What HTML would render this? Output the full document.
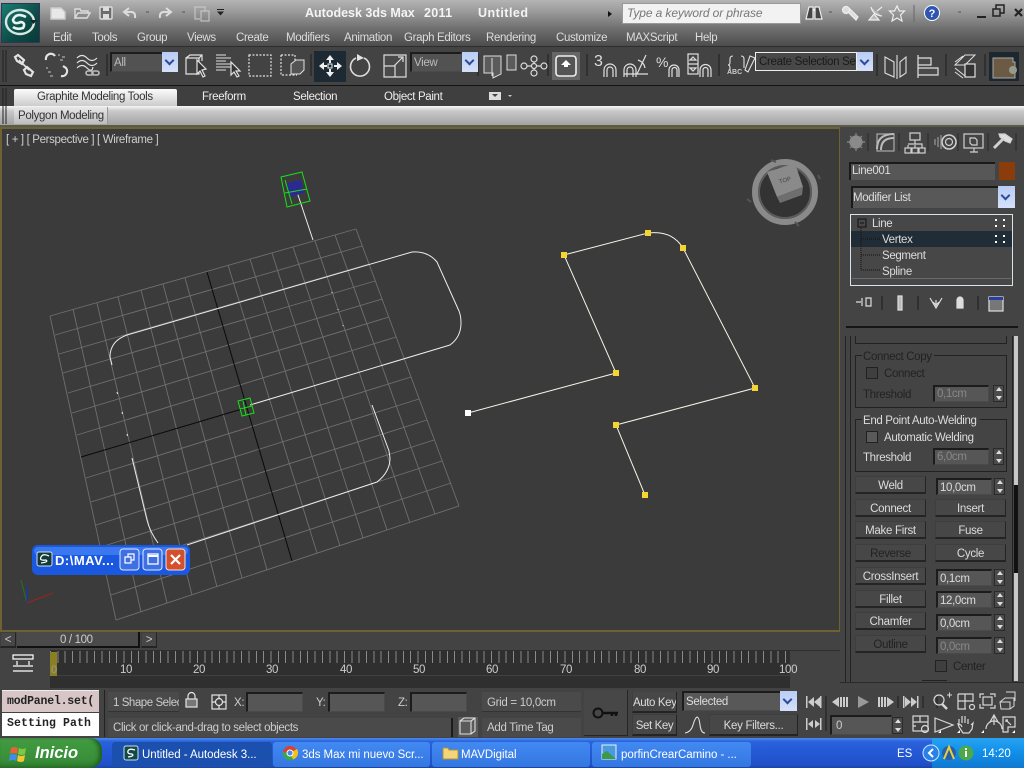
<!DOCTYPE html>
<html><head><meta charset="utf-8"><title>3ds Max</title>
<style>
html,body{margin:0;padding:0;width:1024px;height:768px;overflow:hidden;background:#444}
.a{position:absolute;box-sizing:border-box}
.t{position:absolute;white-space:nowrap;font:11.5px/14px "Liberation Sans",sans-serif;letter-spacing:-.35px;color:#dcdcdc;transform:translateY(1px)}
.f{position:absolute;box-sizing:border-box;background:#565656;border-top:2px solid #1c1c1c;border-left:2px solid #1c1c1c;border-right:1px solid #4a4a4a;border-bottom:1px solid #4a4a4a;white-space:nowrap;overflow:hidden;font:11.5px/14px "Liberation Sans",sans-serif;letter-spacing:-.35px;color:#dcdcdc;padding:2px 2px 0}
.b{position:absolute;box-sizing:border-box;background:#474747;border-right:1px solid #242424;border-bottom:2px solid #242424;border-top:1px solid #3e3e3e;border-left:1px solid #3e3e3e;text-align:center;font:11.5px/18px "Liberation Sans",sans-serif;letter-spacing:-.3px;color:#dcdcdc;white-space:nowrap;overflow:hidden}
.dim{color:#222222}
.ar{position:absolute;width:16px;background:linear-gradient(#b9cdf5,#d5e0fa);box-sizing:border-box}
.ar:after{content:"";position:absolute;left:4px;top:calc(50% - 5px);width:5px;height:5px;border-right:2px solid #2c4c9a;border-bottom:2px solid #2c4c9a;transform:rotate(45deg)}
.sp{position:absolute;width:11px;height:17px;background:#4c4c4c;border:1px solid #2a2a2a;box-sizing:border-box}
.sp:before{content:"";position:absolute;left:2px;top:1px;border:3px solid transparent;border-top:0;border-bottom:4px solid #ddd}
.sp:after{content:"";position:absolute;left:2px;bottom:1px;border:3px solid transparent;border-bottom:0;border-top:4px solid #ddd}
.g{position:absolute;box-sizing:border-box;border:1px solid #222}
.tb{position:absolute;top:742px;height:25px;box-sizing:border-box;border-radius:3px;background:linear-gradient(#4289f2,#3a7ee8 60%,#3378e0);font:11.5px/27px "Liberation Sans",sans-serif;letter-spacing:-.05px;color:#fff;white-space:nowrap;overflow:hidden}
</style></head><body>

<!-- title/menu gradient -->
<div class="a" style="left:0;top:0;width:1024px;height:47px;background:linear-gradient(#b4b4b4,#9a9a9a 25%,#707070 60%,#4a4a4a 100%)"></div>
<div class="a" style="left:0;top:46px;width:1024px;height:40px;background:#434343;border-bottom:1px solid #141414;border-top:1px solid #2e2e2e"></div>
<div class="a" style="left:0;top:86px;width:1024px;height:20px;background:#3f3f3f"></div>
<div class="a" style="left:14px;top:89px;width:163px;height:18px;background:linear-gradient(#fbfbfb,#c9c9c9);border-radius:2px 2px 0 0"></div>
<div class="a" style="left:0;top:106px;width:1024px;height:20px;background:linear-gradient(#f7f7f7,#c8c8c8 25%,#a0a0a0 100%)"></div>
<div class="a" style="left:14px;top:107px;width:94px;height:17px;background:linear-gradient(#e8e8e8,#bdbdbd);border-right:1px solid #999"></div>
<div class="a" style="left:0;top:125px;width:1024px;height:2px;background:#5a5a48"></div>

<!-- App button -->
<div class="a" style="left:1px;top:3px;width:39px;height:40px;background:linear-gradient(135deg,#1b7d73,#0d4a46 60%,#0a3a38);border:1px solid #335"></div>

<!-- viewport -->
<div class="a" style="left:0;top:127px;width:840px;height:505px;background:#3b3b3b;border:2px solid #6f6232;border-right-width:1px"></div>

<!-- command panel -->
<div class="a" style="left:840px;top:127px;width:184px;height:563px;background:#444"></div>
<div class="a" style="left:849px;top:162px;width:146px;height:18px;background:#575757;border-top:2px solid #1a1a1a;border-left:2px solid #1a1a1a"></div>
<div class="a" style="left:999px;top:162px;width:16px;height:18px;background:#8a3d0b"></div>
<div class="a" style="left:851px;top:186px;width:148px;height:22px;background:#585858;border-top:2px solid #1a1a1a;border-left:2px solid #1a1a1a"></div>
<div class="ar" style="left:998px;top:186px;width:17px;height:22px"></div>
<div class="a" style="left:850px;top:214px;width:163px;height:72px;background:#474747;border:1px solid #d8e4ea"></div>
<div class="a" style="left:851px;top:231px;width:161px;height:16px;background:#212d36"></div>
<div class="a" style="left:852px;top:278px;width:159px;height:1px;background:#6a6a6a"></div>
<div class="a" style="left:846px;top:326px;width:172px;height:2px;background:#151515"></div>
<div class="a" style="left:845px;top:336px;width:1px;height:346px;background:#222"></div>
<div class="a" style="left:850px;top:336px;width:1px;height:346px;background:#222"></div>
<div class="a" style="left:1012px;top:336px;width:1px;height:346px;background:#222"></div>
<div class="a" style="left:1014px;top:336px;width:4px;height:345px;background:#c8c8c8"></div>
<div class="a" style="left:1014px;top:485px;width:4px;height:88px;background:#111"></div>
<div class="a" style="left:855px;top:336px;width:152px;height:8px;border:1px solid #222;border-top:0"></div>
<div class="g" style="left:855px;top:355px;width:152px;height:53px"></div>
<div class="g" style="left:855px;top:419px;width:152px;height:53px"></div>
<div class="a" style="left:922px;top:680px;width:25px;height:1px;background:#222"></div>
<div class="a" style="left:840px;top:682px;width:184px;height:1px;background:#2a2a2a"></div>

<!-- time slider -->
<div class="a" style="left:0;top:632px;width:840px;height:58px;background:#434343"></div>
<div class="a" style="left:0;top:688px;width:1024px;height:50px;background:#434343"></div>
<div class="b" style="left:0;top:632px;width:16px;height:16px;line-height:15px;color:#ccc">&lt;</div>
<div class="a" style="left:17px;top:632px;width:123px;height:16px;background:#4a4a4a;border-right:2px solid #111;border-bottom:2px solid #111"></div>
<div class="b" style="left:141px;top:632px;width:16px;height:16px;line-height:15px;color:#ccc">&gt;</div>
<div class="a" style="left:50px;top:650px;width:740px;height:38px;background:#2f2f2f"></div>
<div class="a" style="left:790px;top:650px;width:50px;height:1px;background:#2f2f2f"></div>
<div class="a" style="left:50px;top:651px;width:740px;height:12px;background:repeating-linear-gradient(90deg,#8a8a8a 0 1px,transparent 1px 7.35px)"></div>
<div class="a" style="left:50px;top:675px;width:740px;height:1px;background:#404040"></div>
<div class="a" style="left:50px;top:652px;width:7px;height:24px;background:#8a7f22"></div>

<!-- listener -->
<div class="a" style="left:2px;top:690px;width:97px;height:22px;background:#d8c5c5;border-top:1px solid #eee;padding-left:5px"><div style="width:86px;overflow:hidden;font:bold 11.5px/21px 'Liberation Mono',monospace;letter-spacing:-.2px;color:#222;white-space:nowrap">modPanel.set(</div></div>
<div class="a" style="left:2px;top:713px;width:97px;height:23px;background:#fff;overflow:hidden;font:bold 11.5px/21px 'Liberation Mono',monospace;letter-spacing:.1px;color:#222;padding-left:5px;white-space:nowrap">Setting Path</div>
<div class="a" style="left:104px;top:690px;width:1px;height:47px;background:#222"></div>

<!-- status -->
<div class="a" style="left:108px;top:692px;width:71px;height:20px;background:#4a4a4a;border-bottom:1px solid #333;overflow:hidden;font:11.5px/22px 'Liberation Sans';letter-spacing:-.45px;color:#ccc;padding-left:5px;white-space:nowrap">1 Shape Selected</div>
<div class="f" style="left:246px;top:692px;width:57px;height:20px"></div>
<div class="f" style="left:328px;top:692px;width:57px;height:20px"></div>
<div class="f" style="left:410px;top:692px;width:57px;height:20px"></div>
<div class="a" style="left:482px;top:692px;width:99px;height:20px;background:#4a4a4a;border-bottom:1px solid #333;overflow:hidden;font:11.5px/22px 'Liberation Sans';letter-spacing:-.3px;color:#ccc;padding-left:5px">Grid = 10,0cm</div>
<div class="a" style="left:108px;top:718px;width:345px;height:19px;background:#4a4a4a;overflow:hidden;font:11.5px/21px 'Liberation Sans';letter-spacing:-.35px;color:#ccc;padding-left:5px;border-right:2px solid #1c1c1c">Click or click-and-drag to select objects</div>
<div class="a" style="left:482px;top:718px;width:99px;height:19px;background:#4a4a4a;overflow:hidden;font:11.5px/21px 'Liberation Sans';letter-spacing:-.3px;color:#ccc;padding-left:5px">Add Time Tag</div>
<div class="a" style="left:458px;top:717px;width:20px;height:20px;background:#5a5a5a"></div>
<div class="a" style="left:584px;top:690px;width:44px;height:46px;background:#474747;border-right:1px solid #262626;border-bottom:1px solid #262626"></div>
<div class="b" style="left:632px;top:692px;width:45px;height:21px;line-height:22px;border-top:0;letter-spacing:-.4px">Auto Key</div>
<div class="b" style="left:632px;top:714px;width:45px;height:22px;line-height:22px;letter-spacing:-.4px">Set Key</div>
<div class="f" style="left:682px;top:691px;width:100px;height:20px;background:#585858">Selected</div>
<div class="ar" style="left:780px;top:691px;width:17px;height:20px"></div>
<div class="b" style="left:709px;top:714px;width:89px;height:22px;line-height:22px">Key Filters...</div>
<div class="f" style="left:830px;top:715px;width:62px;height:20px;color:#ccc;padding-left:4px">0</div>
<div class="sp" style="left:892px;top:717px;height:17px"></div>

<!-- taskbar -->
<div class="a" style="left:0;top:738px;width:1024px;height:30px;background:linear-gradient(#4a8cf0 0,#2a62dc 12%,#2458d4 50%,#2050c8 90%,#1a42a8 100%)"></div>
<div class="a" style="left:0;top:738px;width:102px;height:30px;border-radius:0 12px 12px 0;background:linear-gradient(#5da85a,#3e9a3e 15%,#3a8f3a 70%,#2c7a2c);box-shadow:inset -3px 0 4px #1d5c1d"></div>
<div class="tb" style="left:112px;width:160px;background:#1c50ae;padding-left:30px">Untitled - Autodesk 3...</div>
<div class="tb" style="left:273px;width:157px;padding-left:29px">3ds Max mi nuevo Scr...</div>
<div class="tb" style="left:432px;width:158px;padding-left:29px">MAVDigital</div>
<div class="tb" style="left:592px;width:159px;padding-left:29px">porfinCrearCamino - ...</div>
<div class="a" style="left:932px;top:738px;width:92px;height:30px;background:linear-gradient(#27a3f2,#0f8ee8 50%,#1178d0)"></div>

<!-- main svg -->
<svg class="a" style="left:0;top:0" width="1024" height="768" viewBox="0 0 1024 768" fill="none">
<!-- grid -->
<g stroke="#6f6f6f" stroke-width=".9">
<path d="M50 316L356 229M55 335L362 246M59 354L369 264M63 373L375 281M68 393L382 299M72 413L389 317M77 435L396 337M86 478L411 377M91 502L419 399M96 525L427 420M101 547L434 440M106 570L442 461M111 595L451 483M116 620L459 506"/>
<path d="M50 316L116 620M73 309L141 612M97 303L167 603M118 297L192 595M141 290L217 587M163 284L242 578M185 278L267 570M228 265L317 553M250 259L340 546M272 253L363 538M293 247L387 530M315 241L410 523M335 235L435 514M356 229L459 506"/>
</g>
<g stroke="#0a0a0a" stroke-width="1"><path d="M207 272L292 561M81 457L242 409"/></g>
<!-- shape 1 -->
<g stroke="#ececec" stroke-width="1">
<path d="M250 405L450 345Q461 337 461 323Q461 316 459 311L437 262Q428 251 412 252L127 335Q110 341 110 357L112 365"/>
<path d="M117 392L117.500 394M122 412L122.500 414M127 434L127.500 436M132 458L147 520Q150 532 158 543M187 545L377 482Q390 472 390 458L389 451L372 405"/>
<path d="M332 292L332 293M338 309L338 310M343 325L343 326" stroke="#ddd"/>
<path d="M297 192L313 240"/>
</g>
<!-- gizmos -->
<path d="M287 183L301 180L304 193L290 197Z" fill="#2a2a90"/>
<g stroke="#18e018" stroke-width="1">
<path d="M281 177L302 172L310 201L287 207ZM285 193L307 189M285 180L292 204"/>
<path d="M238 401L250 398L254 413L242 416ZM240 409L252 406M243 401L246 415"/>
</g>
<!-- shape 2 -->
<path d="M468 413L616 373L564 255L648 233Q672 230 683 248L755 388L616 425L645 495" stroke="#f4f4e8" stroke-width="1"/>
<g fill="#f5d531"><rect x="561" y="252" width="6" height="6"/><rect x="645" y="230" width="6" height="6"/><rect x="680" y="245" width="6" height="6"/><rect x="613" y="370" width="6" height="6"/><rect x="752" y="385" width="6" height="6"/><rect x="613" y="422" width="6" height="6"/><rect x="642" y="492" width="6" height="6"/></g>
<rect x="465" y="410" width="6" height="6" fill="#fff"/>
<!-- tripod -->
<path d="M27 603L53 593" stroke="#a02020" stroke-width="1.2"/><path d="M27 603L21 580" stroke="#207020" stroke-width="1.2"/><path d="M27 603L27 586" stroke="#2030b0" stroke-width="1.2"/>
<!-- viewcube -->
<g>
<circle cx="785" cy="192" r="30" stroke="#8a8a8a" stroke-width="6"/>
<circle cx="785" cy="192" r="26" fill="#333" stroke="#5c5c5c" stroke-width="2"/>
<path d="M767 172L795 163L803 187L777 197Z" fill="#8a8a8a"/>
<path d="M777 197L803 187L802 195L780 203Z" fill="#6e6e6e"/>
<path d="M747 199L751 202M771 160L776 162M818 175L820 179M795 222L799 226" stroke="#555" stroke-width="2"/>
<text x="785" y="182" font-family="Liberation Sans" font-size="6" fill="#444" text-anchor="middle" transform="rotate(-16 785 180)">TOP</text>
</g>
<!-- App logo -->
<ellipse cx="20" cy="22" rx="14" ry="12" stroke="#d5e8e4" stroke-width="2.4"/>
<path d="M26 17Q16 12 13 20Q14 25 21 22Q26 23 23 28Q17 30 13 27" stroke="#e8f4f0" stroke-width="2.6"/>
<path d="M30 20h7l-3.500 4z" fill="#222"/>
<!-- QAT -->
<g stroke="#eee" stroke-width="1.4">
<path d="M51 8h10l4 4v7H51Z" fill="#e8e8e8" stroke="#ccc"/>
<path d="M75 18V9h5l1 2h7v2M75 18l3-5h12l-3 5Z" fill="#8c8c8c" stroke="#ddd"/>
<rect x="100" y="7" width="12" height="12" rx="1" fill="#6d6d6d" stroke="#ddd"/><rect x="103" y="7" width="6" height="4" fill="#ddd" stroke="none"/><rect x="103" y="14" width="6" height="5" fill="#ddd" stroke="none"/>
<path d="M135 18q1-7-6-6h-4m4-4-5 4 5 4" stroke="#ddd" stroke-width="2"/>
<path d="M160 18q-1-7 6-6h4m-4-4 5 4-5 4" stroke="#ddd" stroke-width="2"/>
<path d="M195 10V7h10v4M195 10v9h5" stroke="#ccc" stroke-width="1"/><rect x="201" y="11" width="8" height="10" stroke="#ccc" stroke-width="1"/>
</g>
<path d="M146 12h3M182 12h3" stroke="#777" stroke-width="2"/>
<path d="M217 9h7v1h-7zM217 11.500h7l-3.500 4z" fill="#222"/>
<!-- toolbars -->
<path d="M3 50V82M6 50V82M3 88V124M6 88V124" stroke="#222"/>
<g stroke="#e2e2e2" stroke-width="1.6">
<!-- link -->
<path d="M15 57l3-2 6 5-2 4-5-3zM24 70l3-3 6 5-2 4-5-2z" stroke-width="2.2"/>
<path d="M19 60l10 10" stroke-width="1.6"/>
<!-- unlink -->
<path d="M46 60a5 5 0 0 1 9-4M61 76a5 5 0 0 0 5-8l-3-2" stroke-width="2.2"/>
<path d="M58 55h2M62 57h3M60 60h3M46 68h2M48 72h3M50 76h3" stroke="#aaa" stroke-width="1.3"/>
<!-- bind -->
<path d="M77 58q5-5 10 0t10 0M77 63q5-5 10 0t10 0M77 68q5-5 10 0t6-1" stroke-width="1.2"/>
<rect x="86" y="71" width="7" height="4" rx="2" stroke="#bbb"/><rect x="92" y="71" width="7" height="4" rx="2" stroke="#bbb"/>
<!-- select obj -->
<path d="M186 58l4-3h12v6M186 58h13v16h-13zM199 58l3-3" stroke-width="1.2" fill="none"/>
<path d="M197 60l0 14 3-3 3 6 2-1-3-6 4-1z" fill="#333" stroke-width="1.2"/>
<!-- by name -->
<path d="M216 55h10M216 58h15M216 61h10M216 64h15M216 67h15M216 70h10" stroke-width="1"/>
<path d="M231 62l0 13 3-3 3 5 2-1-3-5 4 0z" fill="#333" stroke-width="1.2"/>
<!-- rect -->
<rect x="249" y="55" width="22" height="21" stroke-dasharray="2 1.500" stroke-width="1.2"/>
<path d="M281 55h14v5M281 55v20h16" stroke-dasharray="2 1.500" stroke-width="1.2"/>
<path d="M291 64l5-4h8v10l-4 4h-9z" fill="#545454" stroke-width="1"/>
</g>
<rect x="314" y="51" width="32" height="31" fill="#1d2a33"/>
<g fill="#f0f0f0">
<path d="M330 55l4 5h-8zM330 77l4-5h-8zM319 66l5-4v8zM342 66l-5-4v8z"/>
<rect x="324" y="65" width="3" height="2"/><rect x="334" y="65" width="3" height="2"/><rect x="329" y="60" width="2" height="3"/><rect x="329" y="69" width="2" height="3"/>
<rect x="328" y="64" width="4" height="4" fill="none" stroke="#f0f0f0"/>
</g>
<g stroke="#dcdcdc" stroke-width="1.2">
<path d="M356 58a9.500 9.500 0 1 0 8 0" stroke-width="1.6"/><path d="M357 54l7 4-7 3z" fill="#e4e4e4" stroke="none"/>
<path d="M384 58v-3h22v22h-22zM384 66h11v11M394 66l9-9m-5 0h5v5" fill="#4a4a4a"/>
<path d="M484 56h17v18l-8 4v-5h-9zM492 58v18M507 55h9v15h-9z" fill="#5b5b5b" stroke-width="1"/>
<circle cx="534" cy="59" r="3"/><circle cx="534" cy="66" r="2.500"/><circle cx="524" cy="66" r="3"/><circle cx="544" cy="66" r="3"/><circle cx="534" cy="73" r="3"/><path d="M527 66h5M537 66h4M534 62v2M534 69v1"/>
</g>
<rect x="552" y="52" width="28" height="28" fill="#666"/>
<rect x="556" y="56" width="20" height="20" rx="3" fill="#555" stroke="#eee" stroke-width="1.6"/><path d="M566 60l5 5h-3v2h-4v-2h-3z" fill="#fff"/>
<path d="M107 54V76M478 54V76M548 54V76M587 54V76M719 54V76M877 54V76M946 54V76M985 54V76M311 54V76" stroke="#1c1c1c"/>
<g stroke="#e0e0e0" stroke-width="1.2">
<path d="M607 77v-7a3 3 0 0 1 6 0v7M604 77v-7a6 6 0 0 1 12 0v7"/>
<path d="M627 77v-7a3 3 0 0 1 6 0v7M624 77v-7a6 6 0 0 1 12 0v7M624 74h24M637 74l9-19M638 60q6 2 7 8"/>
<path d="M672 77v-7a2.500 2.500 0 0 1 5 0v7M669 77v-7a5 5 0 0 1 10 0v7"/>
<rect x="688" y="54" width="10" height="20"/><path d="M693 57l3 3h-6zM693 71l3-3h-6zM688 64h10"/><path d="M703 77v-7a2.500 2.500 0 0 1 5 0v7M700 77v-7a5 5 0 0 1 11 0v7"/>
<path d="M733 56q-3 0-3 3v3q0 3-2 3q2 0 2 3v3M741 56q3 0 3 3v9M745 70l5-14 5 2-7 14z" stroke-width="1.1"/>
<path d="M885 57l9 5v15l-9-4zM906 57l-6 5v15l6-4zM897 55v24" stroke-width="1.1"/>
<path d="M918 55v23M918 58h13v7h-13zM918 68h20v7h-20z" fill="#4a4a4a" stroke-width="1.2"/>
<path d="M955 65l10-10h10l-10 10zM955 68l10 8M955 72l8 6M955 62l8-6" stroke-width="1"/><rect x="965" y="64" width="10" height="13" fill="#333" stroke-width="1.2"/>
</g>
<rect x="989" y="52" width="30" height="29" fill="#1c2730"/>
<path d="M993 58h20v4h2v16h-22Z" fill="#6b5a44" stroke="#aaa"/><circle cx="1013" cy="70" r="4" fill="#9a9a8a"/>
<!-- search icons -->
<g stroke="#eee" stroke-width="1.2">
<path d="M806 19l2-8 1-4h4v12zM815 19V7h4l1 4 2 8z" fill="#444"/><path d="M813 10h2" stroke-width="2"/>
<path d="M849 8l9 9-2 3-9-9" fill="#ddd"/><circle cx="846" cy="10" r="3.500" fill="#ddd"/>
<path d="M871 7q2 8 11 9M877 11l5-4M869 20l5-6 5 6z" fill="#bbb"/>
<path d="M897 6l2.500 5h5l-4 4 1.500 6-5-3-5 3 1.500-6-4-4h5z"/>
</g>
<path d="M829 12h3M958 12h3" stroke="#777" stroke-width="2"/>
<circle cx="932" cy="13" r="7.500" fill="#2f55b0" stroke="#fff" stroke-width="1"/>
<text x="932" y="17" text-anchor="middle" font-family="Liberation Sans" font-weight="bold" font-size="11" fill="#fff">?</text>
<path d="M914 5V22" stroke="#666"/>
<path d="M977 17h9" stroke="#222" stroke-width="2"/>
<path d="M993 9h7v7h-7zM996 9V5h8v8h-4" stroke="#222" stroke-width="1.500" />
<path d="M1015 9l7 7m0-7l-7 7" stroke="#222" stroke-width="2.200"/>
<path d="M608 11l4 3-4 3z" fill="#111"/>
<path d="M494 95h4M489 92h12v8h-12z" fill="#ddd"/><path d="M492 94l3 3 3-3z" fill="#444"/>
<path d="M508 95h4l-2 2z" fill="#ccc"/>
<!-- cmd tabs -->
<g stroke="#d0d0d0" stroke-width="1.200">
<circle cx="856" cy="142" r="6" fill="#8a8a8a" stroke="#8a8a8a"/><path d="M856 133v18M847 142h18M850 136l12 12M862 136l-12 12" stroke="#8a8a8a"/>
<rect x="877" y="134" width="17" height="17" stroke="#aaa"/><path d="M877 149q0-15 17-15M881 150q0-12 13-12" stroke="#bbb" stroke-width="2"/>
<path d="M910 133h10v7h-10zM915 140v4M908 144h14v1M908 145v3M915 145v3M922 145v3"/><rect x="905" y="148" width="6" height="5"/><rect x="912" y="148" width="6" height="5"/><rect x="919" y="148" width="6" height="5"/>
<circle cx="949" cy="142" r="7" stroke-width="1.600"/><circle cx="949" cy="142" r="3.500"/><path d="M938 137v10M941 135v14M935 139v6" stroke="#999"/>
<rect x="964" y="134" width="19" height="14"/><path d="M970 152h8M974 148v4M970 143v-5h5l2 2v5h-5z"/>
<path d="M994 148l10-10" stroke-width="3"/><path d="M999 134h6l7 5-2 4-5-2-5-4z" fill="#ddd"/>
</g>
<path d="M868 133V151M899 133V151M928 133V151M958 133V151M988 133V151M1016 133V151" stroke="#2a2a2a"/>
<!-- stack -->
<rect x="858" y="219" width="8" height="8" stroke="#111" fill="none"/><path d="M860 223h4" stroke="#111"/>
<path d="M861 228V270M861 239h20M861 255h20M861 270h20" stroke="#111" stroke-dasharray="1 1"/>
<g fill="#fff"><rect x="995" y="219" width="2" height="2"/><rect x="1003" y="219" width="2" height="2"/><rect x="995" y="225" width="2" height="2"/><rect x="1003" y="225" width="2" height="2"/><rect x="995" y="235" width="2" height="2"/><rect x="1003" y="235" width="2" height="2"/><rect x="995" y="241" width="2" height="2"/><rect x="1003" y="241" width="2" height="2"/></g>
<!-- stack btns -->
<g stroke="#ddd" stroke-width="1.200">
<path d="M856 302h5M862 298v8M866 298h5v8h-5z"/>
<path d="M898 296h4v14h-4z" fill="#bbb"/>
<path d="M930 298l6 10 6-10M936 300v8M933 302l3 3 3-3" />
<path d="M957 300a3 3 0 0 1 6 0v8h-6z" fill="#ddd"/>
<rect x="989" y="297" width="14" height="14" fill="#777"/><rect x="989" y="297" width="14" height="3" fill="#2a3ea0" stroke="none"/>
</g>
<path d="M882 296V310M918 296V310M978 296V310" stroke="#1c1c1c"/>
<!-- checkboxes -->
<g stroke="#222"><rect x="866.500" y="367.500" width="11" height="11" fill="#3f3f3f"/><rect x="866.500" y="431.500" width="11" height="11" fill="#5a5a5a"/><rect x="935.500" y="660.500" width="11" height="11" fill="#3f3f3f"/></g>
<!-- status icons -->
<g stroke="#e4e4e4" stroke-width="1.2">
<path d="M188 699v-3a3.500 3.500 0 0 1 7 0v3"/><rect x="186" y="699" width="11" height="8" fill="#777"/>
<rect x="212" y="695" width="14" height="14"/><circle cx="219" cy="702" r="3.500"/><path d="M219 695v3.500M219 705.500V709M212 702h3.500M222.500 702H226"/>
<path d="M460 721l4-3h11v13l-4 3h-11zM460 721h11v13M471 721l4-3" stroke="#ddd" stroke-width="1.100"/>
<path d="M40 652h20v4H40zM40 656h20M40 663h20M40 668h20M44 662v-4M56 662v-4" stroke="#fff" stroke-width="1.200" transform="translate(-27 3) scale(1)"/>
</g>
<circle cx="598" cy="713" r="4.500" stroke="#111" stroke-width="2"/><path d="M602 713h16M612 713v3M616 713v3" stroke="#111" stroke-width="2.400"/>
<path d="M685 733q6-1 8-8t4-8q2 0 3 8t5 8" stroke="#ddd" stroke-width="1.100"/>
<!-- playback -->
<g fill="#ccc">
<path d="M806 696v12h1.500v-12zM808 702l6-5v10zM814 702l6-5v10zM820 696h1.500v12H820z"/>
<path d="M832 702l7-5v10zM840 697h2v10h-2zM843 697h2v10h-2zM846 697h2v10h-2z"/>
<path d="M858 696l11 6-11 6z" fill="#999"/>
<path d="M878 697h2v10h-2zM881 697h2v10h-2zM884 697h2v10h-2zM887 697l7 5-7 5z"/>
<path d="M905 697l6 5-6 5zM911 697l6 5-6 5zM917 696h1.500v12H917zM903 696h1.500v12H903z"/>
<path d="M806 718h1.500v12H806zM808 724l5-4v8zM815 720l5 4-5 4zM820 718h1.500v12H820z"/>
</g>
<path d="M826 696V731M898 696V708M923 696V708M937 696V708" stroke="#1c1c1c"/>
<g stroke="#d8d8d8" stroke-width="1.200">
<circle cx="939" cy="700" r="5"/><path d="M942 704l5 5" stroke-width="2.500"/><path d="M947 695h5M949.500 692.500v5" stroke-width="1"/>
<path d="M958 694h15v8M958 694v15h8M958 701h15M965 694v15" />
<circle cx="972" cy="707" r="2.500"/>
<path d="M980 698v-4h4M990 694h5v3M980 704v4h4M990 708h5v-3" /><rect x="983" y="697" width="9" height="8"/>
<path d="M1000 702l5-4h9v8l-4 3h-9zM1006 692h9v9M1000 702h10v7" stroke-width="1"/>
<rect x="913" y="716" width="15" height="15"/><path d="M913 722h15M920 716v6M913 726h3"/><circle cx="925" cy="729" r="3.500"/>
<path d="M935 718l18 7-18 7z"/>
<path d="M959 724v-5m3 4v-7m3 7v-7m3 8v-5m3 6l2-2-1 6-3 4h-6l-4-6-1-3 3 1 1 2"/>
<path d="M986 729a8 8 0 0 1 16 0M994 715v10M990 722l4-7 4 7" />
<path d="M1003 717h12v10h-7v5h-5zM1006 720l5 5m-5-3v-2h2"/>
</g>
<path d="M957 733l3-3v3zM981 733l3-3v3zM1012 733l3-3v3zM938 733l3-3v3z" fill="#fff"/>
<!-- floating window -->
<rect x="32" y="545" width="158" height="30" rx="6" fill="#1a58e0"/>
<rect x="34" y="547" width="154" height="8" rx="4" fill="#3a78f0"/>
<rect x="37" y="552" width="15" height="14" rx="2" fill="#123a3a" stroke="#cde" stroke-width="1"/><path d="M49 556q-6-3-8 1t5 3q3 2-5 3" stroke="#fff" stroke-width="1.300"/>
<rect x="120" y="549" width="19" height="21" rx="3" fill="#3f6fe4" stroke="#dfe8ff"/><rect x="143" y="549" width="19" height="21" rx="3" fill="#3f6fe4" stroke="#dfe8ff"/><rect x="166" y="549" width="19" height="21" rx="3" fill="#d4502c" stroke="#f8dfd4"/>
<path d="M125 557h6v6h-6zM128 557v-3h6v6h-3" stroke="#fff" stroke-width="1.200"/><rect x="148" y="554" width="10" height="10" stroke="#fff" stroke-width="1.300"/><path d="M148 556h10" stroke="#fff" stroke-width="2"/><path d="M171 555l9 9m0-9l-9 9" stroke="#fff" stroke-width="2.200"/>
<!-- tasks icons -->
<rect x="124" y="746" width="14" height="14" rx="2" fill="#124a4a" stroke="#cde"/><path d="M135 750q-6-2-7 1t4 3q3 2-4 3" stroke="#fff" stroke-width="1.300"/>
<circle cx="290" cy="753" r="7" fill="#d8412f"/><path d="M290 753L297 749A7 7 0 0 1 293 759.500z" fill="#f2c01a"/><path d="M290 753L293 759.500A7 7 0 0 1 283 752z" fill="#35a853"/><circle cx="290" cy="753" r="3" fill="#4a86e8" stroke="#fff"/>
<path d="M443 748h5l1 2h9v9h-15z" fill="#f4d67a" stroke="#b89030"/>
<rect x="602" y="745" width="14" height="14" fill="#4a9ae0" stroke="#eee"/><path d="M602 759v-5l5-3 9 8z" fill="#3a9a4a"/>
<!-- start flag -->
<path d="M11 748q3-2 7 0l-1 6q-3-2-7 0z" fill="#e8613a"/><path d="M19 748q3 2 7 0l-1 6q-3 2-7 0z" fill="#7fc844"/><path d="M10 755q3-2 7 0l-1 6q-3-2-7 0z" fill="#3f8fe8"/><path d="M18 755q3 2 7 0l-1 6q-3 2-7 0z" fill="#f2c732"/>
<!-- tray -->
<circle cx="931" cy="753" r="8" fill="#2a7fe8" stroke="#cfe6ff"/><path d="M933 749l-4 4 4 4" stroke="#fff" stroke-width="2"/>
<circle cx="949" cy="753" r="7" fill="#2a60a0"/><path d="M944 759l5-12 5 12" stroke="#e8d040" stroke-width="2"/>
<circle cx="966" cy="753" r="7.500" fill="#4ca848"/><rect x="965" y="751" width="2" height="6" fill="#fff"/><rect x="965" y="748" width="2" height="2" fill="#fff"/>
</svg>

<!-- search -->
<div class="a" style="left:622px;top:3px;width:179px;height:21px;background:#f2f2f2;border:1px solid #999;font:italic 12px/19px 'Liberation Sans';letter-spacing:-.1px;color:#777;padding-left:4px">Type a keyword or phrase</div>

<!-- text -->
<span class="t" style="left:305px;top:5px;font-weight:bold;font-size:12.500px;color:#f4f4f4;letter-spacing:0">Autodesk 3ds Max</span>
<span class="t" style="left:424px;top:5px;font-weight:bold;font-size:12.500px;color:#f4f4f4;letter-spacing:.3px">2011</span>
<span class="t" style="left:478px;top:5px;font-weight:bold;font-size:12.500px;color:#f4f4f4;letter-spacing:.5px">Untitled</span>

<span class="t" style="left:53px;top:30px">Edit</span><span class="t" style="left:92px;top:30px">Tools</span><span class="t" style="left:137px;top:30px">Group</span><span class="t" style="left:187px;top:30px">Views</span><span class="t" style="left:236px;top:30px">Create</span><span class="t" style="left:286px;top:30px">Modifiers</span><span class="t" style="left:344px;top:30px">Animation</span><span class="t" style="left:404px;top:30px">Graph Editors</span><span class="t" style="left:486px;top:30px">Rendering</span><span class="t" style="left:556px;top:30px">Customize</span><span class="t" style="left:626px;top:30px">MAXScript</span><span class="t" style="left:695px;top:30px">Help</span>

<div class="f" style="left:110px;top:52px;width:53px;height:20px;color:#bbb;background:#525252">All</div><div class="ar" style="left:162px;top:52px;height:20px"></div>
<div class="f" style="left:410px;top:52px;width:52px;height:20px;color:#bbb;background:#525252">View</div><div class="ar" style="left:462px;top:52px;height:20px"></div>
<div class="a" style="left:755px;top:52px;width:102px;height:19px;background:#484848;border:1px solid #eee;overflow:hidden;font:11.5px/19px 'Liberation Sans';letter-spacing:-.3px;color:#1a1a1a;white-space:nowrap;padding-left:3px">Create Selection Set</div><div class="ar" style="left:857px;top:52px;height:19px"></div>

<span class="t" style="left:594px;top:52px;font-size:16px;line-height:18px;letter-spacing:0;color:#ddd">3</span>
<span class="t" style="left:656px;top:52px;font-size:14px;line-height:18px;letter-spacing:0;color:#ddd">%</span>
<span class="t" style="left:727px;top:67px;font-size:7px;line-height:9px;font-weight:bold;letter-spacing:0;color:#ccc">ABC</span>

<span class="t" style="left:37px;top:89px;color:#333">Graphite Modeling Tools</span>
<span class="t" style="left:202px;top:89px;color:#eee">Freeform</span>
<span class="t" style="left:293px;top:89px;color:#eee">Selection</span>
<span class="t" style="left:384px;top:89px;color:#eee">Object Paint</span>
<span class="t" style="left:18px;top:108px;color:#333">Polygon Modeling</span>

<span class="t" style="left:6px;top:132px;color:#cfcfcf">[ + ] [ Perspective ] [ Wireframe ]</span>
<span class="t" style="left:55px;top:552px;font:bold 13px/16px 'Liberation Sans';color:#fff;letter-spacing:.5px">D:\MAV...</span>

<span class="t" style="left:852px;top:163px">Line001</span>
<span class="t" style="left:853px;top:190px">Modifier List</span>
<span class="t" style="left:872px;top:216px">Line</span>
<span class="t" style="left:882px;top:232px">Vertex</span>
<span class="t" style="left:882px;top:248px">Segment</span>
<span class="t" style="left:882px;top:264px">Spline</span>

<span class="t dim" style="left:862px;top:349px;background:#444;padding:0 2px 0 1px">Connect Copy</span>
<span class="t dim" style="left:884px;top:366px">Connect</span>
<span class="t dim" style="left:863px;top:387px">Threshold</span>
<div class="f" style="left:933px;top:385px;width:56px;height:17px;color:#888;padding:1px 2px 0;line-height:13px">0,1cm</div><div class="sp" style="left:993px;top:385px"></div>
<span class="t" style="left:862px;top:413px;background:#444;padding:0 3px 0 1px">End Point Auto-Welding</span>
<span class="t" style="left:884px;top:430px">Automatic Welding</span>
<span class="t" style="left:863px;top:450px">Threshold</span>
<div class="f" style="left:933px;top:448px;width:56px;height:17px;color:#888;padding:1px 2px 0;line-height:13px">6,0cm</div><div class="sp" style="left:993px;top:448px"></div>

<div class="b" style="left:855px;top:476px;width:71px;height:18px">Weld</div>
<div class="f" style="left:936px;top:478px;width:56px;height:17px;padding:1px 2px 0;line-height:14px">10,0cm</div><div class="sp" style="left:994px;top:478px"></div>
<div class="b" style="left:855px;top:499px;width:71px;height:18px">Connect</div><div class="b" style="left:935px;top:499px;width:71px;height:18px">Insert</div>
<div class="b" style="left:855px;top:521px;width:71px;height:18px">Make First</div><div class="b" style="left:935px;top:521px;width:71px;height:18px">Fuse</div>
<div class="b dim" style="left:855px;top:544px;width:71px;height:18px;color:#222">Reverse</div><div class="b" style="left:935px;top:544px;width:71px;height:18px">Cycle</div>
<div class="b" style="left:855px;top:567px;width:71px;height:18px">CrossInsert</div>
<div class="f" style="left:936px;top:569px;width:56px;height:17px;padding:1px 2px 0;line-height:14px">0,1cm</div><div class="sp" style="left:994px;top:569px"></div>
<div class="b" style="left:855px;top:590px;width:71px;height:18px">Fillet</div>
<div class="f" style="left:936px;top:591px;width:56px;height:17px;padding:1px 2px 0;line-height:14px">12,0cm</div><div class="sp" style="left:994px;top:591px"></div>
<div class="b" style="left:855px;top:612px;width:71px;height:18px">Chamfer</div>
<div class="f" style="left:936px;top:614px;width:56px;height:17px;padding:1px 2px 0;line-height:14px">0,0cm</div><div class="sp" style="left:994px;top:614px"></div>
<div class="b" style="left:855px;top:635px;width:71px;height:18px;color:#222">Outline</div>
<div class="f" style="left:936px;top:637px;width:56px;height:17px;padding:1px 2px 0;line-height:14px;color:#888">0,0cm</div><div class="sp" style="left:994px;top:637px"></div>
<span class="t dim" style="left:953px;top:659px">Center</span>

<span class="t" style="left:60px;top:632px;color:#ccc">0 / 100</span>
<span class="t" style="left:51px;top:662px;color:#999;font-size:11px">0</span>
<span class="t" style="left:120px;top:662px;color:#ccc">10</span><span class="t" style="left:193px;top:662px;color:#ccc">20</span><span class="t" style="left:266px;top:662px;color:#ccc">30</span><span class="t" style="left:340px;top:662px;color:#ccc">40</span><span class="t" style="left:413px;top:662px;color:#ccc">50</span><span class="t" style="left:486px;top:662px;color:#ccc">60</span><span class="t" style="left:560px;top:662px;color:#ccc">70</span><span class="t" style="left:634px;top:662px;color:#ccc">80</span><span class="t" style="left:707px;top:662px;color:#ccc">90</span><span class="t" style="left:779px;top:662px;color:#ccc">100</span>

<span class="t" style="left:234px;top:695px;color:#ccc">X:</span><span class="t" style="left:316px;top:695px;color:#ccc">Y:</span><span class="t" style="left:398px;top:695px;color:#ccc">Z:</span>

<span class="t" style="left:35px;top:741px;font:italic bold 16.5px/22px 'Liberation Sans';letter-spacing:0;color:#fff">Inicio</span>
<span class="t" style="left:897px;top:746px;color:#fff;letter-spacing:0">ES</span>
<span class="t" style="left:982px;top:746px;color:#fff;letter-spacing:0">14:20</span>
</body></html>
